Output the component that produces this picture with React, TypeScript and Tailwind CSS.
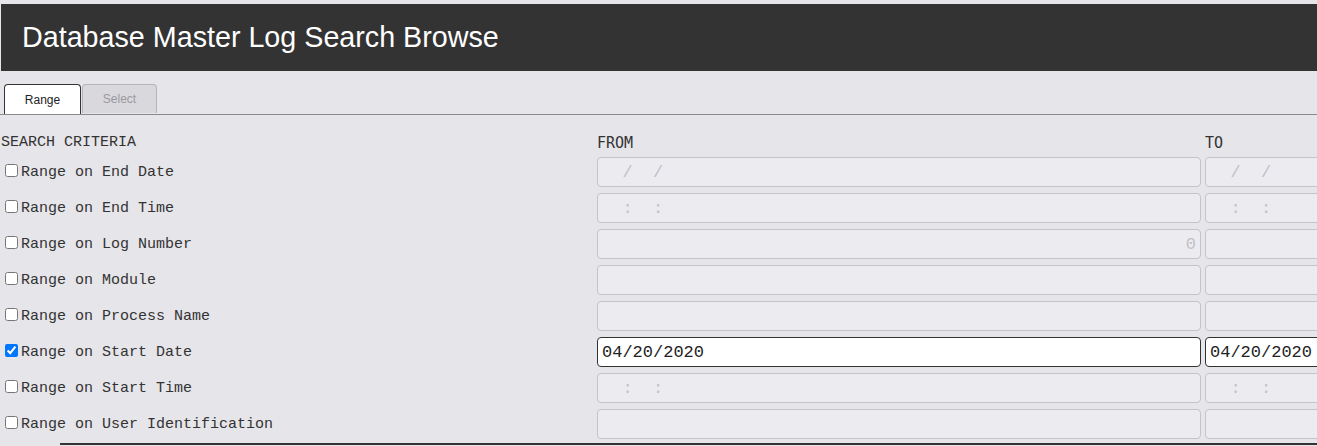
import React from "react";

type Row = {
  label: string;
  from: string;
  to: string;
  checked?: boolean;
  right?: boolean;
};

const ROWS: Row[] = [
  { label: "Range on End Date", from: "  /  /", to: "  /  /" },
  { label: "Range on End Time", from: "  :  :", to: "  :  :" },
  { label: "Range on Log Number", from: "0", to: "", right: true },
  { label: "Range on Module", from: "", to: "" },
  { label: "Range on Process Name", from: "", to: "" },
  { label: "Range on Start Date", from: "04/20/2020", to: "04/20/2020", checked: true },
  { label: "Range on Start Time", from: "  :  :", to: "  :  :" },
  { label: "Range on User Identification", from: "", to: "" },
];

function Field({ value, active, right }: { value: string; active?: boolean; right?: boolean }) {
  return (
    <input
      readOnly
      value={value}
      className={
        active
          ? "h-[30px] w-full rounded-[4px] border border-[#333] bg-white px-[4px] font-['Liberation_Mono',monospace] text-[17px] text-[#222] outline-none"
          : right
          ? "h-[30px] w-full rounded-[4px] border border-[#c4c3c8] bg-[#ecebf0] px-[4px] text-right font-['Liberation_Mono',monospace] text-[17px] text-[#c2c1c6] outline-none"
          : "h-[30px] w-full rounded-[4px] border border-[#c4c3c8] bg-[#ecebf0] px-[4px] font-['Liberation_Mono',monospace] text-[17px] text-[#c2c1c6] outline-none"
      }
    />
  );
}

export default function App() {
  return (
    <div className="h-[446px] w-[1317px] overflow-hidden bg-[#e6e5ea] pt-[4px]">
      <div className="ml-[1px] flex h-[67px] items-center bg-[#333333] pl-[21px]">
        <h1 className="font-['Liberation_Sans',Arial,sans-serif] text-[28.7px] font-normal text-white">
          Database Master Log Search Browse
        </h1>
      </div>

      <div className="mt-[13px] flex border-b border-[#8a8a8c] pl-[4px] font-['Liberation_Sans',Arial,sans-serif] text-[12px]">
        <div className="flex h-[30px] w-[77px] items-center justify-center rounded-t-[4px] border border-b-0 border-[#333] bg-white text-[#222]">
          Range
        </div>
        <div className="ml-[1px] flex h-[29px] w-[75px] items-center justify-center rounded-t-[4px] border border-b-0 border-[#b5b4b9] bg-[#d9d8dd] text-[#9a999e]">
          Select
        </div>
      </div>

      <div className="grid w-[1809px] grid-cols-[593px_604px_604px] gap-x-[4px] pt-[15px]">
        <div className="flex h-[24px] items-center pl-[1px] pt-[2px] font-['Liberation_Mono',monospace] text-[15px] text-[#333]">
          SEARCH CRITERIA
        </div>
        <div className="col-start-2 flex h-[24px] items-center pt-[2px] font-['DejaVu_Sans_Mono',monospace] text-[15px] text-[#333]">
          FROM
        </div>
        <div className="flex h-[24px] items-center pt-[2px] font-['DejaVu_Sans_Mono',monospace] text-[15px] text-[#333]">
          TO
        </div>

        {ROWS.map((row) => (
          <React.Fragment key={row.label}>
            <label className="flex h-[36px] items-center font-['Liberation_Mono',monospace] text-[15px] text-[#333]">
              <input
                type="checkbox"
                readOnly
                checked={!!row.checked}
                className="mb-[3px] ml-[5px] mr-[3px] mt-0 h-[13px] w-[13px]"
              />
              <span className="pt-[2px]">{row.label}</span>
            </label>
            <div className="flex h-[36px] items-center">
              <Field value={row.from} active={row.checked} right={row.right} />
            </div>
            <div className="flex h-[36px] items-center">
              <Field value={row.to} active={row.checked} />
            </div>
          </React.Fragment>
        ))}
      </div>

      <div className="ml-[60px] mt-[1px] border-t-2 border-[#333]" />
    </div>
  );
}
